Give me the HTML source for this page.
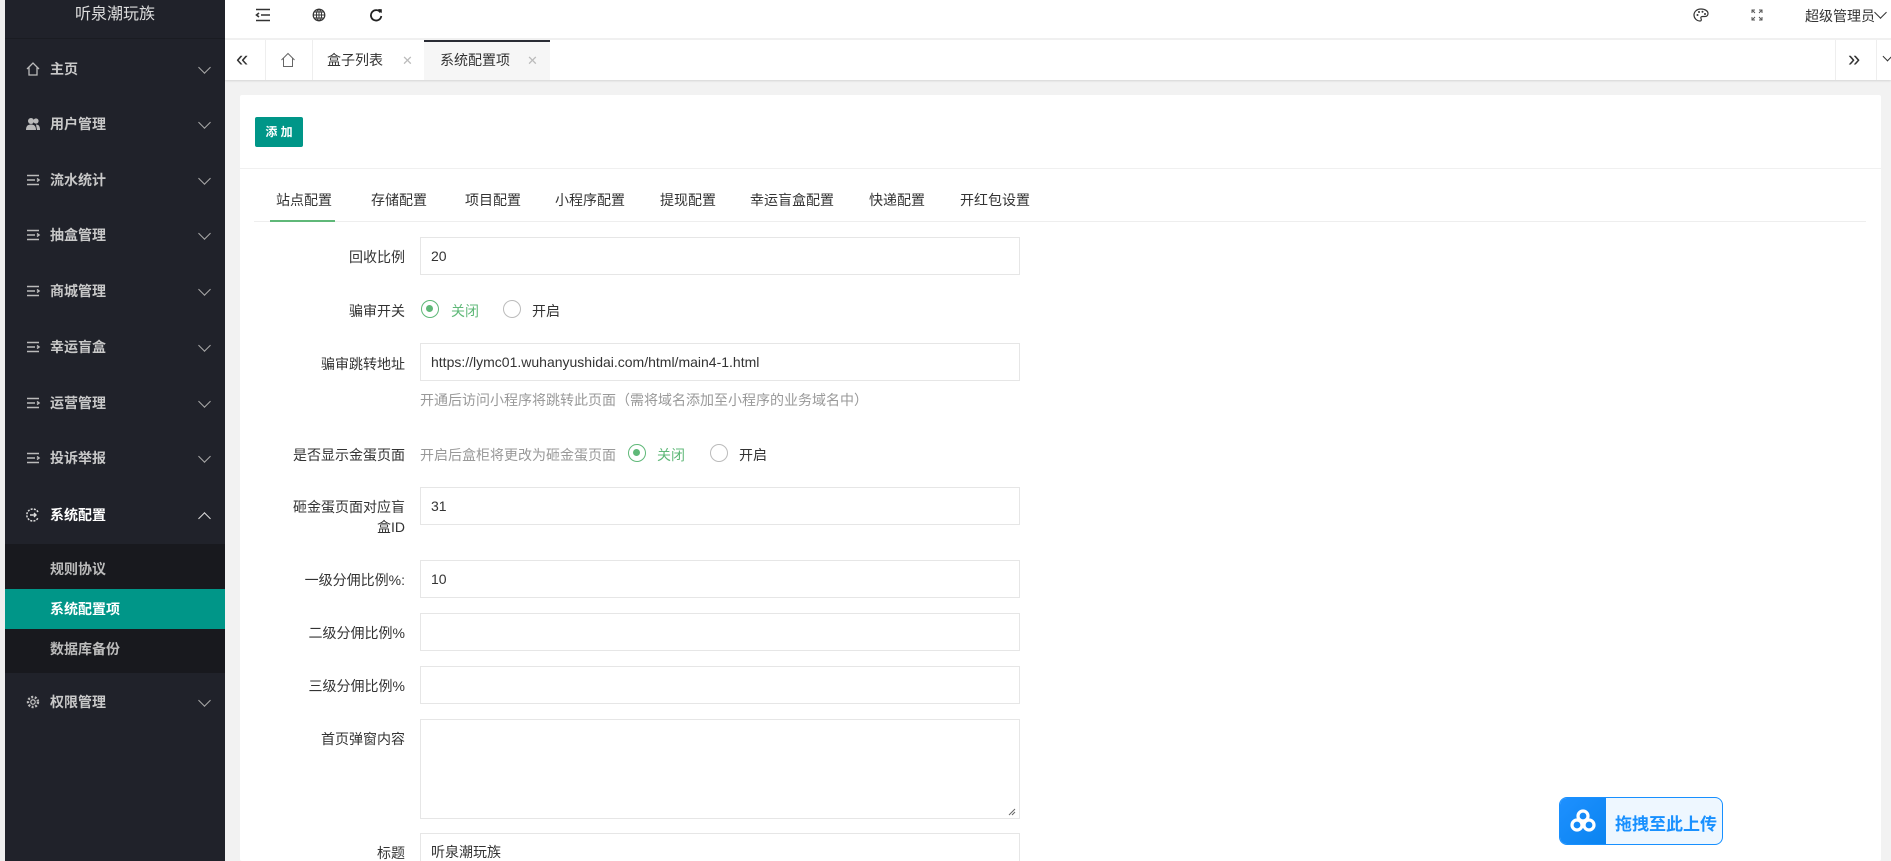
<!DOCTYPE html>
<html><head><meta charset="utf-8"><style>
*{margin:0;padding:0;box-sizing:border-box}
html{width:1891px;height:861px;overflow:hidden}
body{width:1891px;height:861px;overflow:hidden;background:#f2f2f2;font-family:"Liberation Sans","Noto Sans CJK SC",sans-serif;font-size:14px;color:#333;position:relative}
.a{position:absolute}
.side{left:5px;top:0;width:220px;height:861px;background:#20222a}
.strip{left:0;top:0;width:5px;height:861px;background:#eee}
.logo{left:5px;top:0;width:220px;height:39px;color:#ddd;font-size:16px;text-align:center;line-height:30px;border-bottom:1px solid #1a1c22}
.mi{left:5px;width:220px;height:20px;line-height:20px;color:#c8c8c8;font-weight:bold;font-size:14px}
.mi .t{position:absolute;left:45px}
.mi .ic{position:absolute;left:20px;top:2px;width:16px;height:16px}
.mi .ch{position:absolute;left:195px;top:4px;width:9px;height:9px;border-right:1.5px solid #aaa;border-bottom:1.5px solid #aaa;transform:rotate(45deg)}
.sub{left:5px;top:544px;width:220px;height:129px;background:#18191e}
.si{left:5px;width:220px;height:40px;line-height:40px;padding-left:45px;color:#bbb;font-weight:bold}
.hdr{left:225px;top:0;width:1666px;height:39px;background:#fff;border-bottom:1px solid #f0f0f0}
.tabs{left:225px;top:40px;width:1666px;height:40px;background:#fff;box-shadow:0 1px 2px rgba(0,0,0,.12)}
.card{left:240px;top:95px;width:1641px;height:766px;background:#fff;border-radius:2px}
.lbl{position:absolute;right:1486px;text-align:right;color:#333;font-size:14px}
.inp{position:absolute;left:420px;width:600px;height:38px;border:1px solid #e6e6e6;background:#fff;padding-left:10px;line-height:36px;font-size:14px;color:#333}
.radio{position:absolute;width:18px;height:18px;border:1.5px solid #bbb;border-radius:50%}
.radio.on{border-color:#5fb878}
.radio.on:after{content:"";position:absolute;left:4px;top:4px;width:7px;height:7px;border-radius:50%;background:#5fb878}
.ctab{position:absolute;top:190px;font-size:14px;color:#333}
</style></head><body>
<div class="a strip"></div>
<div class="a side"></div>
<div class="a logo">听泉潮玩族</div>

<div class="a mi" style="top:59px"><svg class="ic" viewBox="0 0 16 16"><path d="M2 8L8 2L14 8M4 6.5V14H12V6.5" fill="none" stroke="#bbb" stroke-width="1.3"/></svg><span class="t">主页</span><i class="ch"></i></div>
<div class="a mi" style="top:114px"><svg class="ic" viewBox="0 0 16 16"><circle cx="6" cy="5" r="3" fill="#bbb"/><circle cx="11" cy="5" r="2.6" fill="#bbb"/><path d="M1 14c0-4 2-5.5 5-5.5s5 1.5 5 5.5zM11 8.5c2.5 0 4 1.5 4 5.5h-3" fill="#bbb"/></svg><span class="t">用户管理</span><i class="ch"></i></div>
<div class="a mi" style="top:170px"><svg class="ic" viewBox="0 0 16 16"><path d="M2 3.5H14M2 8H10M2 12.5H14M12 6.5L14 8L12 9.5" fill="none" stroke="#bbb" stroke-width="1.5"/></svg><span class="t">流水统计</span><i class="ch"></i></div>
<div class="a mi" style="top:225px"><svg class="ic" viewBox="0 0 16 16"><path d="M2 3.5H14M2 8H10M2 12.5H14M12 6.5L14 8L12 9.5" fill="none" stroke="#bbb" stroke-width="1.5"/></svg><span class="t">抽盒管理</span><i class="ch"></i></div>
<div class="a mi" style="top:281px"><svg class="ic" viewBox="0 0 16 16"><path d="M2 3.5H14M2 8H10M2 12.5H14M12 6.5L14 8L12 9.5" fill="none" stroke="#bbb" stroke-width="1.5"/></svg><span class="t">商城管理</span><i class="ch"></i></div>
<div class="a mi" style="top:337px"><svg class="ic" viewBox="0 0 16 16"><path d="M2 3.5H14M2 8H10M2 12.5H14M12 6.5L14 8L12 9.5" fill="none" stroke="#bbb" stroke-width="1.5"/></svg><span class="t">幸运盲盒</span><i class="ch"></i></div>
<div class="a mi" style="top:393px"><svg class="ic" viewBox="0 0 16 16"><path d="M2 3.5H14M2 8H10M2 12.5H14M12 6.5L14 8L12 9.5" fill="none" stroke="#bbb" stroke-width="1.5"/></svg><span class="t">运营管理</span><i class="ch"></i></div>
<div class="a mi" style="top:448px"><svg class="ic" viewBox="0 0 16 16"><path d="M2 3.5H14M2 8H10M2 12.5H14M12 6.5L14 8L12 9.5" fill="none" stroke="#bbb" stroke-width="1.5"/></svg><span class="t">投诉举报</span><i class="ch"></i></div>
<div class="a mi" style="top:505px;color:#fff"><svg class="ic" viewBox="0 0 16 16"><path d="M13 5A6 6 0 1 0 13 11" fill="none" stroke="#ddd" stroke-width="1.5" stroke-dasharray="2 1.2"/><path d="M5 8H11M9 6L11 8L9 10" fill="none" stroke="#ddd" stroke-width="1.4"/></svg><span class="t">系统配置</span><i class="ch" style="transform:rotate(225deg);top:9px;border-color:#ddd"></i></div>
<div class="a sub"></div>
<div class="a si" style="top:549px">规则协议</div>
<div class="a si" style="top:589px;background:#009688;color:#fff">系统配置项</div>
<div class="a si" style="top:629px">数据库备份</div>
<div class="a mi" style="top:692px"><svg class="ic" viewBox="0 0 16 16"><circle cx="8" cy="8" r="5" fill="none" stroke="#bbb" stroke-width="2.4" stroke-dasharray="2 1.6"/><circle cx="8" cy="8" r="2.2" fill="none" stroke="#bbb" stroke-width="1.3"/></svg><span class="t">权限管理</span><i class="ch"></i></div>

<div class="a hdr"></div>
<svg class="a" style="left:255px;top:8px" width="16" height="14" viewBox="0 0 16 14"><path d="M1 1.5H15M6 7H15M1 12.5H15M4 5L1.5 7L4 9" fill="none" stroke="#333" stroke-width="1.6"/></svg>
<svg class="a" style="left:312px;top:8px" width="14" height="14" viewBox="0 0 14 14"><circle cx="7" cy="7" r="5.8" fill="none" stroke="#333" stroke-width="1.2"/><ellipse cx="7" cy="7" rx="2.6" ry="5.8" fill="none" stroke="#333"/><path d="M1.2 7H12.8M2 4H12M2 10H12M7 1.2V12.8" stroke="#333" stroke-width=".9"/></svg>
<svg class="a" style="left:369px;top:8px" width="14" height="14" viewBox="0 0 14 14"><path d="M11.5 4.5A5.2 5.2 0 1 0 12.3 8" fill="none" stroke="#222" stroke-width="1.8"/><path d="M9 1L12.8 1.2V5.2Z" fill="#222"/></svg>
<svg class="a" style="left:1693px;top:8px" width="16" height="14" viewBox="0 0 16 14"><path d="M8 1C3.5 1 1 4 1 7s2.5 6 6 6c1.5 0 1.5-1.5 1-2.5s0-2 1.5-2H12c2 0 3-1.5 3-3C15 3 12 1 8 1z" fill="none" stroke="#333" stroke-width="1.2"/><circle cx="4.5" cy="7" r="1" fill="#333"/><circle cx="6" cy="4" r="1" fill="#333"/><circle cx="9.5" cy="3.8" r="1" fill="#333"/><circle cx="12" cy="6" r="1" fill="#333"/></svg>
<svg class="a" style="left:1751px;top:9px" width="12" height="12" viewBox="0 0 12 12"><path d="M1 4V1H4M1 1L4 4M8 1H11V4M11 1L8 4M1 8V11H4M1 11L4 8M8 11H11V8M11 11L8 8" fill="none" stroke="#555" stroke-width="1"/></svg>
<div class="a" style="left:1805px;top:6px;font-size:14px;color:#333">超级管理员</div>
<i class="a" style="left:1876px;top:8px;width:9px;height:9px;border-right:1.3px solid #333;border-bottom:1.3px solid #333;transform:rotate(45deg)"></i>

<div class="a tabs"></div>
<div class="a" style="left:265px;top:40px;width:1px;height:40px;background:#eee"></div>
<div class="a" style="left:312px;top:40px;width:1px;height:40px;background:#eee"></div>
<div class="a" style="left:236px;top:46px;font-size:22px;color:#333">«</div>
<svg class="a" style="left:280px;top:52px" width="16" height="16" viewBox="0 0 16 16"><path d="M1.5 8L8 1.5L14.5 8M3.5 6V14.5H12.5V6" fill="none" stroke="#666" stroke-width="1"/></svg>
<div class="a" style="left:327px;top:50px;color:#333">盒子列表</div>
<div class="a" style="left:402px;top:53px;color:#bbb;font-size:13px">✕</div>
<div class="a" style="left:424px;top:40px;width:126px;height:40px;background:#f6f6f6;border-top:2px solid #292b34"></div>
<div class="a" style="left:440px;top:50px;color:#333">系统配置项</div>
<div class="a" style="left:527px;top:53px;color:#bbb;font-size:13px">✕</div>
<div class="a" style="left:1835px;top:40px;width:1px;height:40px;background:#eee"></div>
<div class="a" style="left:1876px;top:40px;width:1px;height:40px;background:#eee"></div>
<div class="a" style="left:1848px;top:46px;font-size:22px;color:#333">»</div>
<i class="a" style="left:1884px;top:53px;width:7px;height:7px;border-right:1.3px solid #333;border-bottom:1.3px solid #333;transform:rotate(45deg)"></i>

<div class="a card"></div>
<div class="a" style="left:255px;top:117px;width:48px;height:30px;background:#009688;color:#fff;font-size:12px;font-weight:bold;text-align:center;line-height:30px;border-radius:2px">添 加</div>
<div class="a" style="left:240px;top:168px;width:1641px;height:1px;background:#f0f0f0"></div>
<div class="a" style="left:254px;top:221px;width:1612px;height:1px;background:#eee"></div>
<div class="a" style="left:270px;top:220px;width:65px;height:2px;background:#5fb878"></div>
<span class="ctab" style="left:276px">站点配置</span>
<span class="ctab" style="left:371px">存储配置</span>
<span class="ctab" style="left:465px">项目配置</span>
<span class="ctab" style="left:555px">小程序配置</span>
<span class="ctab" style="left:660px">提现配置</span>
<span class="ctab" style="left:750px">幸运盲盒配置</span>
<span class="ctab" style="left:869px">快递配置</span>
<span class="ctab" style="left:960px">开红包设置</span>

<span class="lbl" style="top:247px">回收比例</span>
<div class="inp" style="top:237px">20</div>
<span class="lbl" style="top:301px">骗审开关</span>
<div class="radio on" style="left:421px;top:300px"></div><span class="a" style="left:451px;top:301px;color:#5fb878">关闭</span>
<div class="radio" style="left:503px;top:300px"></div><span class="a" style="left:532px;top:301px">开启</span>
<span class="lbl" style="top:354px">骗审跳转地址</span>
<div class="inp" style="top:343px">https://lymc01.wuhanyushidai.com/html/main4-1.html</div>
<span class="a" style="left:420px;top:390px;color:#999">开通后访问小程序将跳转此页面（需将域名添加至小程序的业务域名中）</span>
<span class="lbl" style="top:445px">是否显示金蛋页面</span>
<span class="a" style="left:420px;top:445px;color:#999">开启后盒柜将更改为砸金蛋页面</span>
<div class="radio on" style="left:628px;top:444px"></div><span class="a" style="left:657px;top:445px;color:#5fb878">关闭</span>
<div class="radio" style="left:710px;top:444px"></div><span class="a" style="left:739px;top:445px">开启</span>
<span class="lbl" style="top:497px;line-height:20px">砸金蛋页面对应盲<br>盒ID</span>
<div class="inp" style="top:487px">31</div>
<span class="lbl" style="top:570px">一级分佣比例%:</span>
<div class="inp" style="top:560px">10</div>
<span class="lbl" style="top:623px">二级分佣比例%</span>
<div class="inp" style="top:613px"></div>
<span class="lbl" style="top:676px">三级分佣比例%</span>
<div class="inp" style="top:666px"></div>
<span class="lbl" style="top:729px">首页弹窗内容</span>
<div class="inp" style="top:719px;height:100px"></div>
<svg class="a" style="left:1008px;top:808px" width="8" height="8" viewBox="0 0 8 8"><path d="M1 7L7 1M4 7L7 4" stroke="#666"/></svg>
<span class="lbl" style="top:843px">标题</span>
<div class="inp" style="top:833px;height:40px">听泉潮玩族</div>

<div class="a" style="left:1559px;top:797px;width:164px;height:48px;border:1px solid #1890ff;border-radius:8px;background:#eef7ff"></div>
<div class="a" style="left:1560px;top:798px;width:46px;height:46px;border-radius:7px 0 0 7px;background:linear-gradient(135deg,#1e90ff,#0a84f0)"></div>
<svg class="a" style="left:1569px;top:808px" width="28" height="26" viewBox="0 0 28 26"><g fill="none" stroke="#fff" stroke-width="3.2"><circle cx="14" cy="8" r="5"/><circle cx="8" cy="17" r="5"/><circle cx="20" cy="17" r="5"/></g></svg>
<div class="a" style="left:1615px;top:810px;color:#1890ff;font-size:17px;font-weight:bold">拖拽至此上传</div>
</body></html>
